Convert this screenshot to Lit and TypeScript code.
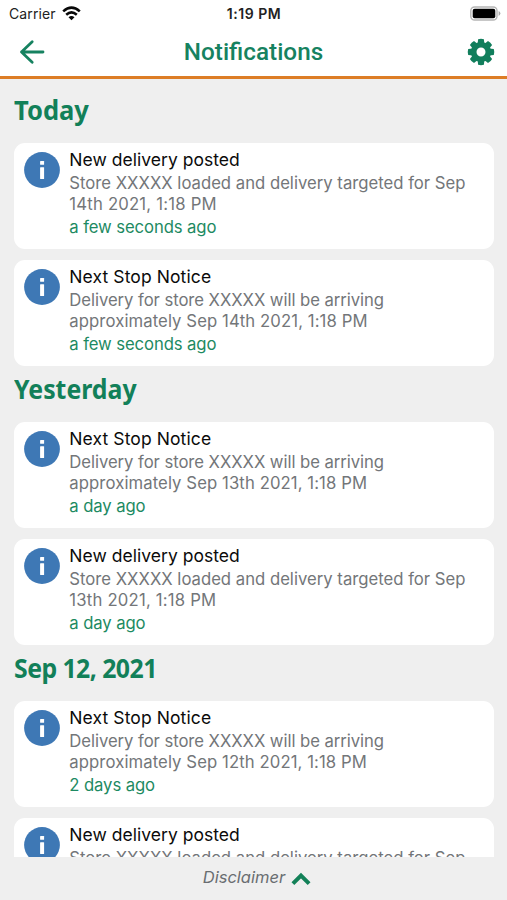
import { LitElement, html, css, svg } from "lit";
import { customElement, property } from "lit/decorators.js";

type Notice = { title: string; kind: string; lines: string[]; ago: string };
type Group = { label: string; kind: string; items: Notice[] };

const posted = (day: string, ago: string): Notice => ({
  title: "New delivery posted",
  kind: "posted",
  lines: ["Store XXXXX loaded and delivery targeted for Sep", `${day} 2021, 1:18 PM`],
  ago,
});
const nextStop = (day: string, ago: string): Notice => ({
  title: "Next Stop Notice",
  kind: "next",
  lines: ["Delivery for store XXXXX will be arriving", `approximately Sep ${day} 2021, 1:18 PM`],
  ago,
});

const groups: Group[] = [
  { label: "Today", kind: "today", items: [posted("14th", "a few seconds ago"), nextStop("14th", "a few seconds ago")] },
  { label: "Yesterday", kind: "yesterday", items: [nextStop("13th", "a day ago"), posted("13th", "a day ago")] },
  { label: "Sep 12, 2021", kind: "date", items: [nextStop("12th", "2 days ago"), posted("12th", "2 days ago")] },
];

@customElement("notice-card")
export class NoticeCard extends LitElement {
  @property({ attribute: false }) notice!: Notice;

  static styles = css`
    :host {
      display: flex;
      box-sizing: border-box;
      height: 106.7px;
      padding: 9.5px 10px 0 9.5px;
      border-radius: 11px;
      background: #fff;
      font-family: Inter, "Liberation Sans", sans-serif;
      white-space: nowrap;
    }
    .info { width: 36px; height: 36px; flex: none; margin-right: 9.5px; }
    .title { font-size: 17.5px; line-height: 21px; margin-top: -3.4px; color: #0b0b0b; letter-spacing: 0.03px; }
    .next .title { letter-spacing: 0.1px; }
    .line { font-size: 16.7px; line-height: 20.8px; color: #737679; letter-spacing: 0; }
    .next .first { letter-spacing: -0.06px; }
    .second { letter-spacing: 0.2px; }
    .next .second { letter-spacing: 0.09px; }
    .first { margin-top: 3.4px; }
    .ago { font-size: 16.7px; line-height: 21px; margin-top: 2px; color: #1d8a62; letter-spacing: -0.1px; }
  `;

  render() {
    return html`
      <svg class="info" viewBox="0 0 36 36">
        <circle cx="18" cy="18" r="17.9" fill="#3e78b5" />
        <rect x="16.1" y="9" width="4" height="3.7" rx=".5" fill="#fff" />
        <rect x="16.1" y="15.3" width="4" height="11.8" rx=".5" fill="#fff" />
      </svg>
      <div class=${this.notice.kind}>
        <div class="title">${this.notice.title}</div>
        ${this.notice.lines.map((l, i) => html`<div class="line ${i ? "second" : "first"}">${l}</div>`)}
        <div class="ago">${this.notice.ago}</div>
      </div>
    `;
  }
}

@customElement("app-root")
export class AppRoot extends LitElement {
  static styles = css`
    :host {
      display: flex;
      flex-direction: column;
      width: 507px;
      height: 900px;
      overflow: hidden;
      background: #efefef;
      font-family: Inter, "Liberation Sans", sans-serif;
    }
    .status {
      display: grid;
      grid-template-columns: 1fr auto 1fr;
      align-items: center;
      height: 27px;
      background: #fff;
      padding: 0 6px 0 7px;
      flex: none;
      color: #222;
      font-size: 14px;
    }
    .carrier { display: flex; align-items: center; gap: 6px; padding-left: 2px; letter-spacing: 0.1px; }
    .clock { font-weight: 600; font-size: 14px; letter-spacing: 0.55px; }
    .battery { justify-self: end; width: 31px; height: 15px; }
    .wifi { width: 19px; height: 15px; }
    .bar {
      display: grid;
      grid-template-columns: 1fr auto 1fr;
      align-items: center;
      height: 49px;
      padding: 0 12px;
      box-sizing: border-box;
      background: #fff;
      flex: none;
    }
    .back { width: 26px; height: 26px; margin-left: 7px; }
    .heading { margin: 0; font: 500 24.3px/30px Roboto, sans-serif; color: #168260; }
    .gear { width: 28px; height: 28px; justify-self: end; }
    .rule { height: 3.4px; background: #dd7d26; flex: none; }
    .list { flex: 1; min-height: 0; overflow: hidden; padding: 7.9px 13.5px 0 14.3px; }
    .label {
      margin: 0;
      height: 55.5px;
      font: 700 27px/46px "Noto Sans", sans-serif;
      color: #128059;
      white-space: nowrap;
      transform-origin: 0 0;
    }
    .today { transform: scaleX(0.945); }
    .yesterday { transform: scaleX(0.92); }
    .date { transform: scaleX(0.92); letter-spacing: -0.6px; }
    .cards { display: flex; flex-direction: column; gap: 10.1px; }
    .footer {
      display: flex;
      justify-content: center;
      align-items: center;
      gap: 6px;
      height: 43px;
      flex: none;
      padding-left: 7px;
      box-sizing: border-box;
      color: #696d71;
      font-size: 16.5px;
      font-style: italic;
    }
    .disclaimer { margin-top: -4px; }
    .chevron { width: 20px; height: 14px; margin-top: 1px; }
  `;

  render() {
    const teeth = [0, 45, 90, 135, 180, 225, 270, 315];
    return html`
      <div class="status">
        <div class="carrier">
          <span>Carrier</span>
          <svg class="wifi" viewBox="0 0 19 15" fill="none" stroke="#080808" stroke-width="2.6">
            <path d="M1.2 5.4Q9.5 -2 17.8 5.4" />
            <path d="M4.2 8.7Q9.5 4.1 14.8 8.7" />
            <path d="M9.5 14.3L6.5 11.2Q9.5 8.7 12.5 11.2Z" fill="#080808" stroke="none" />
          </svg>
        </div>
        <span class="clock">1:19 PM</span>
        <svg class="battery" viewBox="0 0 31 15">
          <rect x=".8" y="1" width="26.2" height="13" rx="3.8" fill="#fff" stroke="#b5b5b5" stroke-width="1.4" />
          <rect x="2.7" y="2.8" width="22.6" height="9.4" rx="2" fill="#000" />
          <path d="M28.6 5.1Q30.4 6 30.4 7.5T28.6 9.9Z" fill="#aaa" />
        </svg>
      </div>
      <div class="bar">
        <svg class="back" viewBox="0 0 26 26" fill="none" stroke="#168260" stroke-width="2.8" stroke-linecap="round" stroke-linejoin="round">
          <path d="M13.2 2.7L2.5 13L13.2 23.3M2.5 13H24" />
        </svg>
        <h1 class="heading">Notifications</h1>
        <svg class="gear" viewBox="-14 -14 28 28" fill="#117e5c">
          ${teeth.map((a) => svg`<path d="M-3.4 -8L-2.9 -12.8Q0 -13.7 2.9 -12.8L3.4 -8Z" transform="rotate(${a})" />`)}
          <circle r="7.3" fill="none" stroke="#117e5c" stroke-width="5.6" />
        </svg>
      </div>
      <div class="rule"></div>
      <div class="list">
        ${groups.map((g) => html`
          <h2 class="label ${g.kind}">${g.label}</h2>
          <div class="cards">${g.items.map((n) => html`<notice-card .notice=${n}></notice-card>`)}</div>
        `)}
      </div>
      <div class="footer">
        <span class="disclaimer">Disclaimer</span>
        <svg class="chevron" viewBox="0 0 20 14" fill="none" stroke="#138158" stroke-width="4">
          <path d="M1.9 11.6L10 3.6L18.1 11.6" />
        </svg>
      </div>
    `;
  }
}
